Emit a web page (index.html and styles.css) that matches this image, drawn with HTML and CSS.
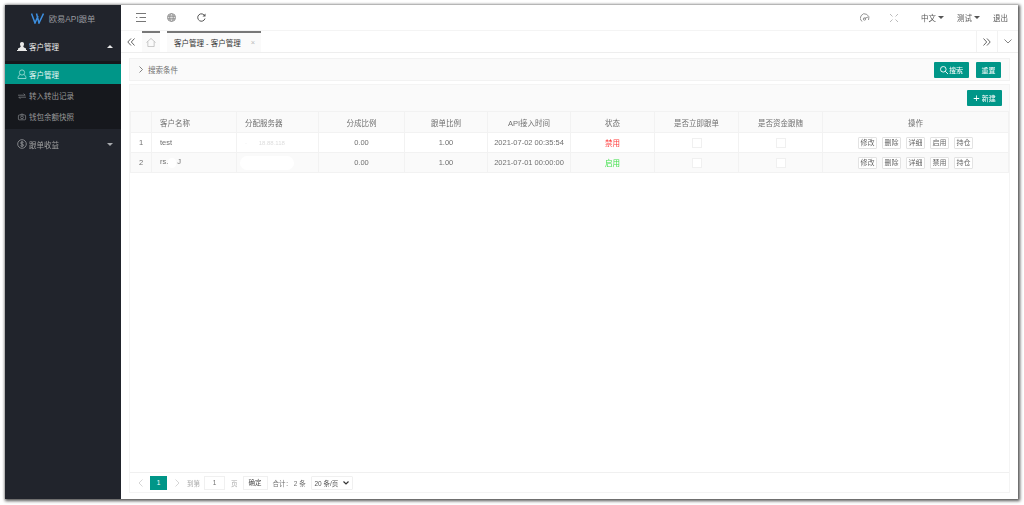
FILE: index.html
```html
<!DOCTYPE html>
<html lang="zh">
<head>
  <meta charset="UTF-8">
  <title>客户管理</title>
  <link rel="stylesheet" href="styles.css">
</head>
<body>

<div class="shell">

  <div class="side">
    <div class="logo">
      <svg width="13" height="11" viewBox="0 0 13 11" fill="none" stroke="#3d8fe0" stroke-width="1.500"><path d="M.5 .5L4 10 7 3M5.500 .5L8 10 12.500 .5"/></svg>
      <span>欧易API跟单</span>
    </div>
    <div class="group">
      <svg class="ico" width="10" height="9" viewBox="0 0 10 9"><path d="M5 0a2 2 0 0 1 2 2.200c0 .9-.4 1.600-.8 2.100L7 5.500l2 1V8.500H1v-2l2-1 .8-1.200C3.400 3.800 3 3.100 3 2.200A2 2 0 0 1 5 0z" fill="#e8e8e8"/><path d="M0 8.500h10" stroke="#e8e8e8"/></svg>
      <span class="group-name on">客户管理</span>
      <i class="arrow up"></i>
    </div>
    <div class="sub">
      <div class="sub-item active">
        <svg class="ico" width="10" height="10" viewBox="0 0 10 10" fill="none" stroke="#a8e0da" stroke-width=".8"><circle cx="5" cy="3.500" r="2.600"/><path d="M3 5.500C1.500 6.500 1 8 1 9.500h8C9 8 8.500 6.500 7 5.500"/></svg>
        <span>客户管理</span>
      </div>
      <div class="sub-item">
        <svg class="ico" width="9" height="8" viewBox="0 0 10 10" fill="none" stroke="#85878b" stroke-width=".9"><path d="M0 4h9L7 2M10 6.500H1L3 8.500"/></svg>
        <span>转入转出记录</span>
      </div>
      <div class="sub-item">
        <svg class="ico" width="9" height="8" viewBox="0 0 10 10" fill="none" stroke="#85878b" stroke-width=".9"><rect x=".5" y="2.500" width="9" height="6" rx="1"/><circle cx="5" cy="5.500" r="1.700"/><path d="M3 2.500l.7-1h2.600l.7 1"/></svg>
        <span>钱包余额快照</span>
      </div>
    </div>
    <div class="group">
      <svg class="ico" width="10" height="10" viewBox="0 0 10 10" fill="none" stroke="#9a9ca0" stroke-width=".8"><circle cx="5" cy="5" r="4.300"/><path d="M6.500 3.500C6 2.800 3.600 2.700 3.600 4c0 1.500 3 .7 3 2.200 0 1.300-2.500 1.200-3.200.4M5 2v6"/></svg>
      <span class="group-name">跟单收益</span>
      <i class="arrow down"></i>
    </div>
  </div>

  <div class="main">

    <div class="topbar">
      <div class="top-left">
        <svg width="10" height="9" viewBox="0 0 10 9" fill="none" stroke="#777" stroke-width="1"><path d="M0 .5h10M0 4.500h10M0 8.500h10"/><path d="M3.500 2.800L1 4.500 3.500 6.200z" fill="#fff" stroke="none"/></svg>
        <svg width="9" height="9" viewBox="0 0 9 9" fill="#ddd" stroke="#888" stroke-width=".8"><circle cx="4.500" cy="4.500" r="4"/><ellipse cx="4.500" cy="4.500" rx="1.800" ry="4"/><path d="M.5 3.200h8M.5 5.800h8"/></svg>
        <svg width="9" height="9" viewBox="0 0 9 9" fill="none" stroke="#555" stroke-width="1"><path d="M7.800 3A3.700 3.700 0 1 0 8 5.500"/><path d="M8.500.5v3h-3" fill="#555" stroke="none"/></svg>
      </div>
      <div class="top-right">
        <svg class="top-ico" width="10" height="9" viewBox="0 0 10 9" fill="none" stroke="#888" stroke-width=".9"><path d="M2 8.500a4.300 4.300 0 1 1 6.500-1.500"/><path d="M4.500 5.500l3.500-1.500"/><circle cx="4.500" cy="6" r="1.200"/></svg>
        <svg class="top-ico wide" width="8" height="8" viewBox="0 0 8 8" fill="none" stroke="#aaa" stroke-width=".8"><path d="M0 0l2.500 2.500M8 0L5.500 2.500M8 8L5.500 5.500M0 8l2.500-2.500"/></svg>
        <span class="top-link">中文<i class="caret"></i></span>
        <span class="top-link">测试<i class="caret"></i></span>
        <span class="top-link last">退出</span>
      </div>
    </div>

    <div class="tabbar">
      <div class="tab-btn first">
        <svg width="8" height="8" viewBox="0 0 8 8" fill="none" stroke="#555" stroke-width=".9"><path d="M4 .5L.8 4 4 7.500M7.500.5L4.300 4l3.200 3.500"/></svg>
      </div>
      <div class="tabs">
        <div class="tab home">
          <svg width="10" height="9" viewBox="0 0 11 10" fill="none" stroke="#aaa" stroke-width=".7"><path d="M.5 5L5.500.5 10.500 5M2 4v5.500h7V4"/></svg>
        </div>
        <div class="tab current">
          <span>客户管理 - 客户管理</span>
          <span class="tab-x">×</span>
        </div>
      </div>
      <div class="tab-btn">
        <svg width="8" height="8" viewBox="0 0 8 8" fill="none" stroke="#555" stroke-width=".9"><path d="M.5.500L3.700 4 .5 7.500M4 .5L7.200 4 4 7.500"/></svg>
      </div>
      <div class="tab-btn">
        <svg width="8" height="5" viewBox="0 0 8 5" fill="none" stroke="#666" stroke-width=".8"><path d="M.5.500L4 4 7.500.5"/></svg>
      </div>
    </div>

    <div class="content">

      <div class="search-panel">
        <div class="search-title">
          <svg width="4" height="7" viewBox="0 0 4 7" fill="none" stroke="#666" stroke-width=".8"><path d="M.5.500L3.500 3.500.5 6.500"/></svg>
          <span>搜索条件</span>
        </div>
        <div class="btns">
          <button class="btn wide">
            <svg width="8" height="8" viewBox="0 0 8 8" fill="none" stroke="#fff" stroke-width=".9"><circle cx="3.300" cy="3.300" r="2.800"/><path d="M5.300 5.300L8 8"/></svg>
            搜索
          </button>
          <button class="btn">重置</button>
        </div>
      </div>

      <div class="table-panel">
        <div class="toolbar">
          <button class="btn wide"><b class="plus">+</b> 新建</button>
        </div>

        <table class="grid">
          <colgroup>
            <col class="c-idx"><col class="c-name"><col class="c-server"><col class="c-rate"><col class="c-rate2">
            <col class="c-time"><col class="c-state"><col class="c-check"><col class="c-check"><col>
          </colgroup>
          <thead>
            <tr>
              <th></th>
              <th class="left">客户名称</th>
              <th class="left">分配服务器</th>
              <th>分成比例</th>
              <th>跟单比例</th>
              <th>API接入时间</th>
              <th>状态</th>
              <th>是否立即跟单</th>
              <th>是否资金跟随</th>
              <th>操作</th>
            </tr>
          </thead>
          <tbody>
            <tr>
              <td>1</td>
              <td class="left">test</td>
              <td class="left"><span class="masked">·&nbsp;&nbsp;&nbsp;&nbsp;&nbsp;&nbsp;&nbsp;18.88.118</span></td>
              <td>0.00</td>
              <td>1.00</td>
              <td>2021-07-02 00:35:54</td>
              <td class="off">禁用</td>
              <td><i class="check"></i></td>
              <td><i class="check"></i></td>
              <td class="ops">
                <button class="op">修改</button><button class="op">删除</button><button class="op">详细</button><button class="op">启用</button><button class="op">持仓</button>
              </td>
            </tr>
            <tr class="alt">
              <td>2</td>
              <td class="left">rs.<i class="blot small"></i>J</td>
              <td class="left"><i class="blot"></i></td>
              <td>0.00</td>
              <td>1.00</td>
              <td>2021-07-01 00:00:00</td>
              <td class="on">启用</td>
              <td><i class="check"></i></td>
              <td><i class="check"></i></td>
              <td class="ops">
                <button class="op">修改</button><button class="op">删除</button><button class="op">详细</button><button class="op">禁用</button><button class="op">持仓</button>
              </td>
            </tr>
          </tbody>
        </table>

        <div class="pager">
          <svg class="pg-arrow" width="5" height="8" viewBox="0 0 5 8" fill="none" stroke="#ccc" stroke-width=".8"><path d="M4.500.500L1 4l3.500 3.500"/></svg>
          <span class="pg-cur">1</span>
          <svg class="pg-arrow" width="5" height="8" viewBox="0 0 5 8" fill="none" stroke="#ccc" stroke-width=".8"><path d="M.5.500L4 4 .5 7.500"/></svg>
          <span class="pg-label">到第</span>
          <span class="pg-input">1</span>
          <span class="pg-label unit">页</span>
          <span class="pg-ok">确定</span>
          <span class="pg-total">合计： 2 条</span>
          <span class="pg-size">20 条/页<svg width="6" height="4" viewBox="0 0 6 4" fill="none" stroke="#333" stroke-width="1.200"><path d="M.5.500L3 3 5.500.5"/></svg></span>
        </div>
      </div>

    </div>
  </div>
</div>

</body>
</html>
```

FILE: styles.css
```css
* {
  box-sizing: border-box;
}
html, body {
  margin: 0;
  height: 100%;
  background: #fff;
  overflow: hidden;
}
body {
  font-family: "Liberation Sans", "Noto Sans CJK SC", sans-serif;
  font-size: 7.500px;
  color: #707070;
}
.shell {
  display: flex;
  width: 1013px;
  height: 494px;
  margin: 5px 0 0 5px;
  background: #fff;
  box-shadow: 1px 1px 3px 1px rgba(0, 0, 0, .65), 0 0 3px rgba(0, 0, 0, .15);
  filter: blur(.3px); /* the screenshot is a scaled-down capture */
}

/* sidebar */
.side {
  width: 116px;
  flex: none;
  background: #21242c;
  color: #a0a0a0;
}
.logo {
  display: flex;
  align-items: center;
  justify-content: center;
  gap: 5px;
  height: 26px;
  font-size: 8.300px;
  color: #989a9f;
}
.group {
  display: flex;
  align-items: center;
  height: 30px;
  padding: 0 8px 0 12px;
}
.group-name {
  flex: 1;
}
.group-name.on {
  color: #eee;
}
.ico {
  flex: none;
  width: 10px;
  margin-right: 2px;
}
.arrow {
  width: 0;
  height: 0;
  border-left: 3px solid transparent;
  border-right: 3px solid transparent;
}
.arrow.up {
  border-bottom: 3px solid #e8e8e8;
}
.arrow.down {
  border-top: 3px solid #a8aaae;
}
.sub {
  background: #16181d;
  height: 68px;
  padding-top: 3px;
  color: #999;
}
.sub-item {
  display: flex;
  align-items: center;
  height: 21px;
  padding-left: 12px;
}
.sub-item.active {
  height: 20px;
  margin-bottom: 1px;
  background: #009688;
  color: #e8f6f5;
}

/* top */
.main {
  flex: 1;
  min-width: 0;
  display: flex;
  flex-direction: column;
}
.topbar {
  display: flex;
  justify-content: space-between;
  align-items: center;
  height: 26px;
  border-bottom: 1px solid #f4f4f4;
}
.top-left {
  display: flex;
  align-items: center;
  gap: 21px;
  padding-left: 15px;
}
.top-right {
  display: flex;
  align-items: center;
  padding-right: 10px;
  color: #555;
}
.top-ico {
  margin-right: 20px;
}
.top-ico.wide {
  margin-right: 23px;
}
.top-link {
  display: flex;
  align-items: center;
  margin-right: 13px;
}
.top-link.last {
  margin-right: 0;
}
.caret {
  margin-left: 2px;
  border-left: 3px solid transparent;
  border-right: 3px solid transparent;
  border-top: 3px solid #555;
}
.tabbar {
  display: flex;
  align-items: stretch;
  height: 22px;
  border-bottom: 1px solid #eee;
}
.tab-btn {
  display: flex;
  align-items: center;
  justify-content: center;
  width: 21px;
  border-left: 1px solid #f2f2f2;
}
.tab-btn.first {
  border-left: 0;
  padding-right: 1px;
}
.tabs {
  flex: 1;
  display: flex;
  gap: 7px;
}
.tab {
  display: flex;
  align-items: center;
  justify-content: center;
  background: #fafafa;
  border-top: 2px solid #777;
}
.tab.home {
  width: 18px;
}
.tab.current {
  width: 94px;
  color: #333;
  gap: 10px;
  padding-left: 1px;
}
.tab-x {
  color: #bbb;
}

/* content */
.content {
  flex: 1;
  min-height: 0;
  padding: 5px 8px 6px 8px;
  display: flex;
  flex-direction: column;
  gap: 3px;
}
.search-panel {
  display: flex;
  justify-content: space-between;
  align-items: center;
  height: 23px;
  padding: 0 8px 0 9px;
  background: #fafafa;
  border: 1px solid #f2f2f2;
}
.search-title {
  display: flex;
  align-items: center;
  gap: 5px;
}
.btns {
  display: flex;
  gap: 7px;
}
.btn {
  display: inline-flex;
  align-items: center;
  justify-content: center;
  gap: 1px;
  width: 25px;
  height: 16px;
  padding: 0;
  border: 0;
  border-radius: 1px;
  background: #009688;
  color: #fff;
  font: inherit;
  font-size: 7px;
}
.btn.wide {
  width: 35px;
}
.plus {
  font-size: 11px;
  font-weight: 400;
  line-height: 1;
  margin-right: 1px;
}
.table-panel {
  flex: 1;
  min-height: 0;
  display: flex;
  flex-direction: column;
  border: 1px solid #f4f4f4;
}
.toolbar {
  display: flex;
  justify-content: flex-end;
  align-items: center;
  height: 26px;
  padding: 0 7px 0 0;
  background: #fafafa;
}
.grid {
  width: 100%;
  border-collapse: collapse;
  table-layout: fixed;
}
.c-idx { width: 21px; }
.c-name { width: 85px; }
.c-server { width: 82px; }
.c-rate { width: 86px; }
.c-rate2 { width: 83px; }
.c-time { width: 83px; }
.c-state { width: 84px; }
.c-check { width: 84px; }
.grid th,
.grid td {
  text-align: center;
  font-weight: 400;
  border: 1px solid #f2f2f2;
  padding: 0;
}
.grid th {
  height: 21px;
  background: #fafafa;
}
.grid td {
  height: 20px;
}
.grid .alt td {
  background: #fafafa;
}
.grid .left {
  text-align: left;
  padding-left: 8px;
}
.grid td.off {
  color: #ff3b3b;
}
.grid td.on {
  color: #3fe04a;
}
.masked {
  color: #ddd;
  font-size: 6px;
}
.blot {
  display: inline-block;
  width: 54px;
  height: 14px;
  margin-left: -5px;
  background: #fff;
  border-radius: 7px;
  vertical-align: middle;
}
.blot.small {
  width: 8px;
  height: 10px;
  margin: 0 1px 0 0;
}
.check {
  display: inline-block;
  width: 10px;
  height: 10px;
  background: #fff;
  border: 1px solid #f0f0f0;
  vertical-align: middle;
}
.ops {
  white-space: nowrap;
}
.op {
  height: 12px;
  width: 19px;
  margin: 0 2.500px;
  padding: 0;
  border: 1px solid #e3e3e3;
  border-radius: 1px;
  background: #fff;
  color: #666;
  font: inherit;
  font-size: 7px;
  line-height: 10px;
}
.pager {
  display: flex;
  align-items: center;
  height: 20px;
  margin-top: auto;
  padding-left: 8px;
  border-top: 1px solid #f0f0f0;
  font-size: 6.500px;
}
.pg-arrow {
  flex: none;
}
.pg-cur {
  display: flex;
  align-items: center;
  justify-content: center;
  width: 17px;
  height: 14px;
  margin: 0 8px 0 7px;
  background: #009688;
  color: #fff;
}
.pg-label {
  margin-left: 7px;
  color: #aaa;
}
.pg-label.unit {
  margin-left: 6px;
}
.pg-input {
  width: 21px;
  height: 14px;
  line-height: 12px;
  margin-left: 4px;
  text-align: center;
  border: 1px solid #f0f0f0;
}
.pg-ok {
  width: 25px;
  height: 14px;
  line-height: 12px;
  margin-left: 5px;
  text-align: center;
  border: 1px solid #f0f0f0;
  color: #444;
}
.pg-total {
  width: 32px;
  margin-left: 5px;
  white-space: nowrap;
}
.pg-size {
  display: flex;
  align-items: center;
  justify-content: space-between;
  width: 42px;
  height: 14px;
  margin-left: 6px;
  padding: 0 3px;
  border: 1px solid #f0f0f0;
  border-radius: 1px;
  color: #555;
}
```
